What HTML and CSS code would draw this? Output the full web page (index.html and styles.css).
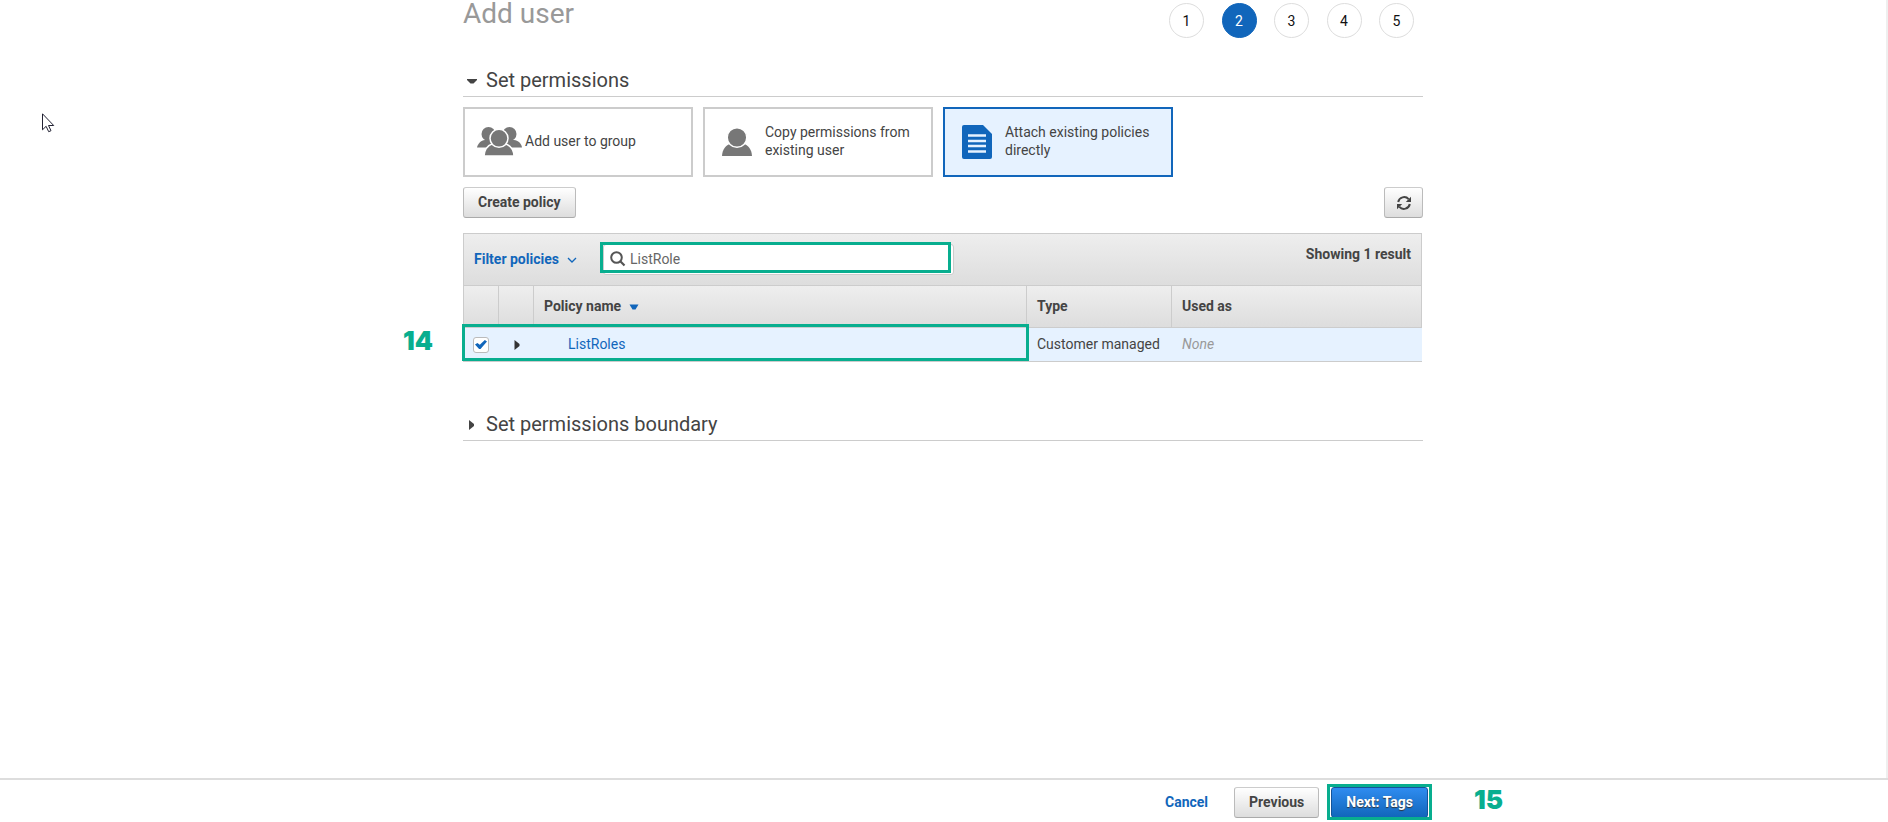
FILE: index.html
```html
<!DOCTYPE html>
<html lang="en">
<head>
<meta charset="utf-8">
<title>Add user</title>
<link rel="stylesheet" href="styles.css">
</head>
<body>
<main class="page">
  <div class="content">
    <header class="page-header">
      <h1 class="title">Add user</h1>
      <ol class="steps">
        <li class="step">1</li>
        <li class="step step-current" aria-current="step">2</li>
        <li class="step">3</li>
        <li class="step">4</li>
        <li class="step">5</li>
      </ol>
    </header>

    <section class="section">
      <h2 class="section-title">
        <button class="section-toggle" type="button" aria-expanded="true">
          <svg class="caret" width="14" height="14" viewBox="0 0 14 14"><path d="M2 5h10v1L8.500 9.500h-3L2 6z" fill="#444"/></svg>
          Set permissions
        </button>
      </h2>

      <div class="options">
        <button class="option" type="button">
          <span class="option-icon option-icon-wide">
            <svg width="45" height="30" viewBox="0 0 45 30">
              <g fill="#777">
                <circle cx="11.500" cy="7" r="7"/><circle cx="32.500" cy="7" r="7"/>
                <path d="M0 20.500C.5 17 4 13.300 8 13h29c4 .3 7.500 3.500 8 7.500z"/>
              </g>
              <g fill="#777" stroke="#fff" stroke-width="1.500">
                <path d="M7 29c.3-6 3.500-10.500 9-12.500h12c5.500 2 8.700 6.500 9 12.500z"/>
                <circle cx="22" cy="11.300" r="9"/>
              </g>
            </svg>
          </span>
          <span class="option-text">Add user to group</span>
        </button>
        <button class="option" type="button">
          <span class="option-icon">
            <svg width="30" height="29" viewBox="0 0 30 29">
              <path d="M0 28c.3-6.500 3.500-10.700 9-12.500h12c5.500 1.800 8.700 6 9 12.500z" fill="#777"/>
              <circle cx="15" cy="9.500" r="9.800" fill="#777" stroke="#fff" stroke-width="1.500"/>
            </svg>
          </span>
          <span class="option-text">Copy permissions from existing user</span>
        </button>
        <button class="option option-selected" type="button">
          <span class="option-icon">
            <svg width="30" height="34" viewBox="0 0 30 34">
              <path d="M2 0h19l9 9v23a2 2 0 0 1-2 2H2a2 2 0 0 1-2-2V2a2 2 0 0 1 2-2z" fill="#1166bb"/>
              <path d="M6 10.500h18M6 16h18M6 21h18M6 26.500h18" stroke="#e6f2ff" stroke-width="2.500"/>
            </svg>
          </span>
          <span class="option-text">Attach existing policies directly</span>
        </button>
      </div>

      <div class="actions">
        <button class="btn" type="button">Create policy</button>
        <button class="btn btn-icon" type="button" aria-label="Refresh">
          <svg width="14" height="14" viewBox="0 0 14 14">
            <path d="M1.200 6A6 6 0 0 1 11.600 3.200M12.800 8A6 6 0 0 1 2.400 10.800" fill="none" stroke="#444" stroke-width="2"/>
            <path d="M14 .8V6H8.800zM0 13.200V8h5.200z" fill="#444"/>
          </svg>
        </button>
      </div>

      <div class="panel">
        <div class="toolbar">
          <button class="filter" type="button">Filter policies
            <svg class="chevron" width="10" height="7" viewBox="0 0 10 7"><path d="M1 1l4 4 4-4" fill="none" stroke="#1166bb" stroke-width="1.300"/></svg>
          </button>
          <div class="search">
            <svg class="search-icon" width="16" height="16" viewBox="0 0 16 16"><circle cx="6.500" cy="6.500" r="5.300" fill="none" stroke="#555" stroke-width="2"/><path d="M10.300 10.300l4.200 4.200" stroke="#555" stroke-width="2.200"/></svg>
            <input class="search-input" type="text" aria-label="Search policies" value="ListRole">
            <span class="mark mark-search"></span>
          </div>
          <span class="count">Showing 1 result</span>
        </div>
        <div class="table-wrap">
          <table class="policies">
            <colgroup><col class="col-check"><col class="col-expand"><col><col class="col-type"><col class="col-used"></colgroup>
            <thead>
              <tr>
                <th></th><th></th>
                <th>Policy name <svg class="sort" width="10" height="6" viewBox="0 0 10 6"><path d="M.5.5h9L6.500 5.500h-3z" fill="#1166bb"/></svg></th>
                <th>Type</th>
                <th>Used as</th>
              </tr>
            </thead>
            <tbody>
              <tr>
                <td class="cell-control"><input class="check" type="checkbox" aria-label="Select ListRoles" checked></td>
                <td class="cell-control"><button class="expand" type="button" aria-label="Expand ListRoles"><svg width="6" height="10" viewBox="0 0 6 10"><path d="M.5 0L5.500 4v2L.5 10z" fill="#333"/></svg></button></td>
                <td class="cell-name"><a class="link" href="#">ListRoles</a></td>
                <td>Customer managed</td>
                <td class="none">None</td>
              </tr>
            </tbody>
          </table>
          <span class="mark mark-row"></span>
          <span class="callout callout-row">14</span>
        </div>
      </div>
    </section>

    <section class="section section-boundary">
      <h2 class="section-title">
        <button class="section-toggle" type="button" aria-expanded="false">
          <svg class="caret" width="14" height="14" viewBox="0 0 14 14"><path d="M4 2L9 6v2L4 12z" fill="#444"/></svg>
          Set permissions boundary
        </button>
      </h2>
    </section>
  </div>
</main>

<footer class="footer">
  <div class="footer-inner">
    <a class="cancel" href="#">Cancel</a>
    <button class="btn" type="button">Previous</button>
    <div class="next">
      <button class="btn btn-primary" type="button">Next: Tags</button>
      <span class="mark mark-next"></span>
      <span class="callout callout-next">15</span>
    </div>
  </div>
</footer>

<svg class="cursor" width="13" height="20" viewBox="0 0 13 20"><path d="M.5.800v16l3.600-3.500 2.600 5.400 2.300-1-2.500-5.200h5.200z" fill="#fff" stroke="#223" stroke-width="1"/></svg>
</body>
</html>
```

FILE: styles.css
```css
* {
  box-sizing: border-box;
}

body {
  margin: 0;
  min-height: 100vh;
  display: flex;
  flex-direction: column;
  background: #fff;
  color: #444;
  font: 14px/18px Roboto, "Liberation Sans", sans-serif;
}

button,
input {
  font: inherit;
  color: inherit;
  margin: 0;
}

h1,
h2,
ol {
  margin: 0;
  padding: 0;
  font-weight: 400;
}

svg {
  display: block;
  flex: none;
}

.page {
  flex: 1;
  border-right: 2px solid #efefef;
}

.content {
  max-width: 960px;
  margin: 0 auto;
}

.page-header {
  display: flex;
  justify-content: space-between;
  align-items: flex-start;
  padding-right: 9px;
}

.title {
  font-size: 28px;
  line-height: 28px;
  color: #999;
}

.steps {
  display: flex;
  justify-content: space-between;
  width: 245px;
  padding-top: 3px;
  list-style: none;
}

.step {
  width: 35px;
  height: 35px;
  border: 1px solid #ddd;
  border-radius: 50%;
  color: #111;
  line-height: 35px;
  text-align: center;
}

.step-current {
  background: #1166bb;
  border-color: #1166bb;
  color: #fff;
}

.section {
  margin-top: 30px;
}

.section-boundary {
  margin-top: 50px;
}

.section-title {
  border-bottom: 1px solid #ccc;
  padding-bottom: 4px;
}

.section-toggle {
  display: flex;
  align-items: center;
  gap: 7px;
  border: 0;
  background: none;
  padding: 0 0 0 2px;
  font-size: 20px;
  line-height: 24px;
}

.caret {
  margin-top: 2px;
}

.options {
  display: flex;
  gap: 10px;
  margin-top: 10px;
}

.option {
  display: flex;
  align-items: center;
  width: 230px;
  height: 70px;
  padding: 0 10px 0 0;
  border: 2px solid #ccc;
  background: #fff;
  text-align: left;
}

.option-selected {
  border-color: #1166bb;
  background: #e6f2ff;
}

.option-icon {
  width: 60px;
  flex: none;
  padding-left: 17px;
}

.option-icon-wide {
  padding-left: 12px;
}

.option-text {
  padding-bottom: 2px;
}

.actions {
  display: flex;
  justify-content: space-between;
  margin-top: 10px;
}

.btn {
  height: 31px;
  padding: 0 14px 2px;
  border: 1px solid #bbb;
  border-top-color: #ccc;
  border-bottom-color: #aaa;
  border-radius: 3px;
  background: linear-gradient(#fff, #ddd);
  font-weight: 700;
}

.btn-icon {
  display: flex;
  align-items: center;
  justify-content: center;
  width: 39px;
  padding: 0;
}

.btn-primary {
  border-color: #14539a;
  background: linear-gradient(#2f8cf0, #1166bb);
  color: #fff;
  text-shadow: 0 1px 1px #333;
}

.panel {
  margin: 15px 1px 0 0;
}

.toolbar {
  display: flex;
  align-items: flex-start;
  padding: 10px;
  border: 1px solid #ccc;
  background: linear-gradient(#eee, #ddd);
  font-weight: 700;
}

.filter {
  display: flex;
  align-items: center;
  gap: 8px;
  width: 129px;
  height: 31px;
  border: 0;
  padding: 0 0 2px;
  background: none;
  color: #1166bb;
  font-weight: 700;
}

.chevron {
  margin-top: 3px;
}

.search {
  position: relative;
  display: flex;
  align-items: center;
  gap: 4px;
  width: 351px;
  height: 31px;
  padding: 0 6px 2px;
  border: 1px solid #ccc;
  border-radius: 3px;
  background: #fff;
}

.search-input {
  flex: 1;
  min-width: 0;
  padding: 0;
  border: 0;
  outline: 0;
  background: none;
  color: #666;
  font-weight: 400;
}

.count {
  margin-left: auto;
  padding-top: 1px;
}

.table-wrap {
  position: relative;
}

.policies {
  width: 100%;
  table-layout: fixed;
  border-collapse: separate;
  border-spacing: 0;
}

.col-check {
  width: 36px;
}

.col-expand {
  width: 35px;
}

.col-type {
  width: 145px;
}

.col-used {
  width: 250px;
}

.policies th {
  height: 42px;
  padding: 0 10px 2px;
  border: solid #ccc;
  border-width: 0 1px 1px 0;
  background: linear-gradient(#eee, #ddd);
  text-align: left;
}

.policies th:first-child {
  border-left-width: 1px;
}

.sort {
  display: inline-block;
  margin-left: 4px;
  vertical-align: 1px;
}

.policies td {
  height: 34px;
  padding: 0 10px 2px;
  border-bottom: 1px solid #ccc;
  background: #e6f2ff;
  white-space: nowrap;
}

.policies .cell-control {
  padding: 0;
}

.policies .cell-name {
  padding-left: 34px;
}

.policies .none {
  color: #999;
  font-style: italic;
}

.check {
  appearance: none;
  display: block;
  width: 16px;
  height: 16px;
  margin: 0 auto;
  border: 1px solid #bbb;
  border-radius: 3px;
  background: #fff;
}

.check:checked::before {
  content: "";
  display: block;
  width: 12px;
  height: 10px;
  margin: 2px 1px;
  background: #1166bb;
  clip-path: polygon(0 50%, 20% 34%, 40% 52%, 82% 4%, 100% 20%, 46% 96%, 34% 96%);
}

.expand {
  display: block;
  margin: 0 auto;
  padding: 0;
  border: 0;
  background: none;
}

.link,
.cancel {
  color: #1166bb;
  text-decoration: none;
}

.mark {
  position: absolute;
  border: 3px solid #08ae8f;
  pointer-events: none;
}

.mark-search {
  inset: -3px 2px 1px -4px;
}

.mark-row {
  left: -1px;
  right: 393px;
  bottom: 1px;
  height: 37px;
}

.mark-next {
  inset: -3px -4px -2px -4px;
}

.callout {
  position: absolute;
  color: #08ae8f;
  font: 900 26px/26px Inter, "Liberation Sans", sans-serif;
}

.callout-row {
  right: 100%;
  bottom: 8px;
  margin-right: 30px;
}

.callout-next {
  left: 100%;
  top: 0;
  margin-left: 46px;
}

.footer {
  padding-right: 2px;
  border-top: 2px solid #ddd;
}

.footer-inner {
  display: flex;
  align-items: center;
  justify-content: flex-end;
  max-width: 970px;
  margin: 0 auto;
  padding: 7px 0 4px;
}

.cancel {
  margin-right: 26px;
  padding-bottom: 2px;
  font-weight: 700;
}

.next {
  position: relative;
  margin-left: 12px;
}

.cursor {
  position: absolute;
  left: 42px;
  top: 113px;
}
```
